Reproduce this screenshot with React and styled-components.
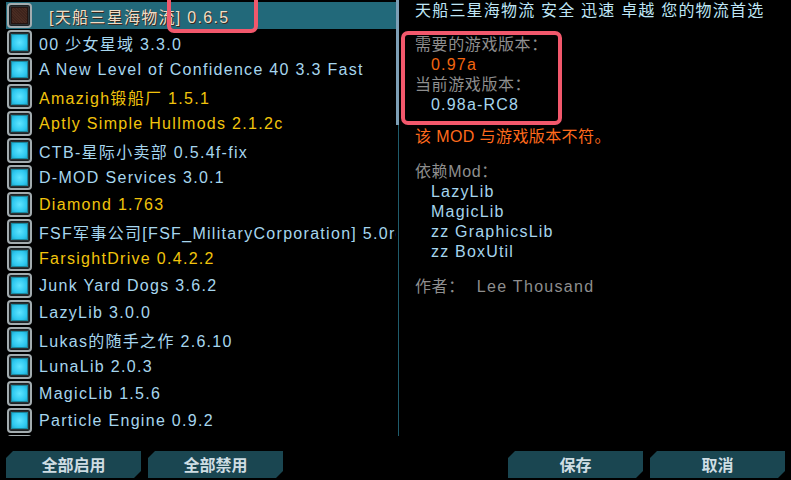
import React from 'react';
import styled, { createGlobalStyle } from 'styled-components';

const GlobalStyle = createGlobalStyle`
  html, body {
    margin: 0;
    padding: 0;
    background: #000;
  }
  body {
    font-family: "Liberation Sans", "Noto Sans CJK SC", sans-serif;
  }
`;

// last entry is only partly visible (its box peeks in under the list)
const mods = [
  { name: '[天船三星海物流] 0.6.5', on: false, selected: true },
  { name: '00 少女星域 3.3.0', on: true },
  { name: 'A New Level of Confidence 40 3.3 Fast', on: true },
  { name: 'Amazigh锻船厂 1.5.1', on: true, util: true },
  { name: 'Aptly Simple Hullmods 2.1.2c', on: true, util: true },
  { name: 'CTB-星际小卖部 0.5.4f-fix', on: true },
  { name: 'D-MOD Services 3.0.1', on: true },
  { name: 'Diamond 1.763', on: true, util: true },
  { name: 'FSF军事公司[FSF_MilitaryCorporation] 5.0rc', on: true },
  { name: 'FarsightDrive 0.4.2.2', on: true, util: true },
  { name: 'Junk Yard Dogs 3.6.2', on: true },
  { name: 'LazyLib 3.0.0', on: true },
  { name: 'Lukas的随手之作 2.6.10', on: true },
  { name: 'LunaLib 2.0.3', on: true },
  { name: 'MagicLib 1.5.6', on: true },
  { name: 'Particle Engine 0.9.2', on: true },
  { name: '', on: true },
];

const Screen = styled.div`
  position: relative;
  width: 791px;
  height: 480px;
  overflow: hidden;
  background: #000;
`;

const Main = styled.div`
  display: flex;
  height: 436px;
`;

const ListPanel = styled.div`
  width: 396px;
  flex-shrink: 0;
  overflow: hidden;
  padding-top: 2px;
  box-sizing: border-box;
`;

const Row = styled.div`
  display: flex;
  align-items: center;
  height: 27px;
  margin-left: 6px;
  background: ${(p) => (p.$selected ? '#22697a' : 'transparent')};
  white-space: nowrap;
`;

const Check = styled.div`
  width: 25px;
  height: 25px;
  box-sizing: border-box;
  flex-shrink: 0;
  border-radius: 4px;
  background: #2b3134;
  border: 2px solid #a3acaf;
  box-shadow: inset 0 0 0 1px #1b2022;
  display: flex;
  align-items: center;
  justify-content: center;
  margin-left: 1px;
`;

const CheckFill = styled.div`
  width: 15px;
  height: 15px;
  border: 1px solid ${(p) => (p.$on ? '#1b8aa0' : '#241410')};
  background: ${(p) =>
    p.$on
      ? 'radial-gradient(circle, #5fe4ff 0%, #2cc6ee 70%, #22a8cc 100%)'
      : 'repeating-linear-gradient(45deg, #3e241c 0 1px, #4a2c22 1px 2px)'};
`;

const ModName = styled.span`
  margin-left: ${(p) => (p.$selected ? '17px' : '7px')};
  font-size: 16px;
  letter-spacing: 1.3px;
  color: ${(p) => (p.$selected ? '#f2dcc4' : p.$util ? '#f2c40c' : '#a6d6ee')};
  text-shadow: ${(p) => (p.$selected ? '1px 1px 0 #3a2a20' : 'none')};
`;

const Scrollbar = styled.div`
  width: 3px;
  flex-shrink: 0;
  display: flex;
  flex-direction: column;
  align-items: flex-end;
`;

const Thumb = styled.div`
  width: 3px;
  height: 125px;
  background: #7d9fb6;
`;

const Track = styled.div`
  width: 1px;
  flex: 1;
  background: #1f5c6c;
`;

const Details = styled.div`
  flex: 1;
  padding: 1px 0 0 16px;
  font-size: 16px;
  line-height: 20px;
  letter-spacing: 1.2px;
  white-space: nowrap;
`;

const Title = styled.div`
  color: #bfe6f6;
`;

const Block = styled.div`
  margin-top: ${(p) => p.$gap}px;
`;

const Label = styled.div`
  color: #8e8e8e;
  letter-spacing: 0.6px;
`;

const Value = styled.div`
  padding-left: ${(p) => (p.$indent ? '16px' : '0')};
  color: ${(p) => (p.$warn ? '#f2650f' : '#a6d6ee')};
`;

const Author = styled.span`
  margin-left: 12px;
  letter-spacing: 1.3px;
`;

const Warning = styled.div`
  color: #ff6a1c;
  letter-spacing: 0.4px;
`;

const Footer = styled.div`
  display: flex;
  justify-content: space-between;
  padding: 15px 6px 0;
`;

const ButtonGroup = styled.div`
  display: flex;
  gap: 7px;
`;

const Button = styled.button`
  width: 135px;
  height: 27px;
  border: none;
  padding: 0;
  background: #1a4651;
  color: #cfdde3;
  font-family: "Noto Sans CJK SC", sans-serif;
  font-size: 16px;
  line-height: 27px;
  font-weight: 700;
  clip-path: polygon(7px 0, 100% 0, 100% calc(100% - 7px), calc(100% - 7px) 100%, 0 100%, 0 7px);
`;

const Marker = styled.div`
  position: absolute;
  left: ${(p) => p.$x}px;
  top: ${(p) => p.$y}px;
  width: ${(p) => p.$w}px;
  height: ${(p) => p.$h}px;
  border: 4px solid #f2586c;
  border-radius: 7px;
  box-sizing: border-box;
  pointer-events: none;
`;

export default function App() {
  return (
    <Screen>
      <GlobalStyle />
      <Main>
        <ListPanel>
          {mods.map((mod, i) => (
            <Row key={i} $selected={mod.selected}>
              <Check>
                <CheckFill $on={mod.on} />
              </Check>
              {mod.name && (
                <ModName $selected={mod.selected} $util={mod.util}>
                  {mod.name}
                </ModName>
              )}
            </Row>
          ))}
        </ListPanel>
        <Scrollbar>
          <Thumb />
          <Track />
        </Scrollbar>
        <Details>
          <Title>天船三星海物流 安全 迅速 卓越 您的物流首选</Title>
          <Block $gap={14}>
            <Label>需要的游戏版本：</Label>
            <Value $indent $warn>0.97a</Value>
            <Label>当前游戏版本：</Label>
            <Value $indent>0.98a-RC8</Value>
          </Block>
          <Block $gap={12}>
            <Warning>该 MOD 与游戏版本不符。</Warning>
          </Block>
          <Block $gap={15}>
            <Label>依赖Mod：</Label>
            <Value $indent>LazyLib</Value>
            <Value $indent>MagicLib</Value>
            <Value $indent>zz GraphicsLib</Value>
            <Value $indent>zz BoxUtil</Value>
          </Block>
          <Block $gap={15}>
            <Label>
              作者：<Author>Lee Thousand</Author>
            </Label>
          </Block>
        </Details>
      </Main>
      <Footer>
        <ButtonGroup>
          <Button>全部启用</Button>
          <Button>全部禁用</Button>
        </ButtonGroup>
        <ButtonGroup>
          <Button>保存</Button>
          <Button>取消</Button>
        </ButtonGroup>
      </Footer>
      <Marker $x={167} $y={-10} $w={91} $h={43} />
      <Marker $x={401} $y={31} $w={161} $h={94} />
    </Screen>
  );
}
